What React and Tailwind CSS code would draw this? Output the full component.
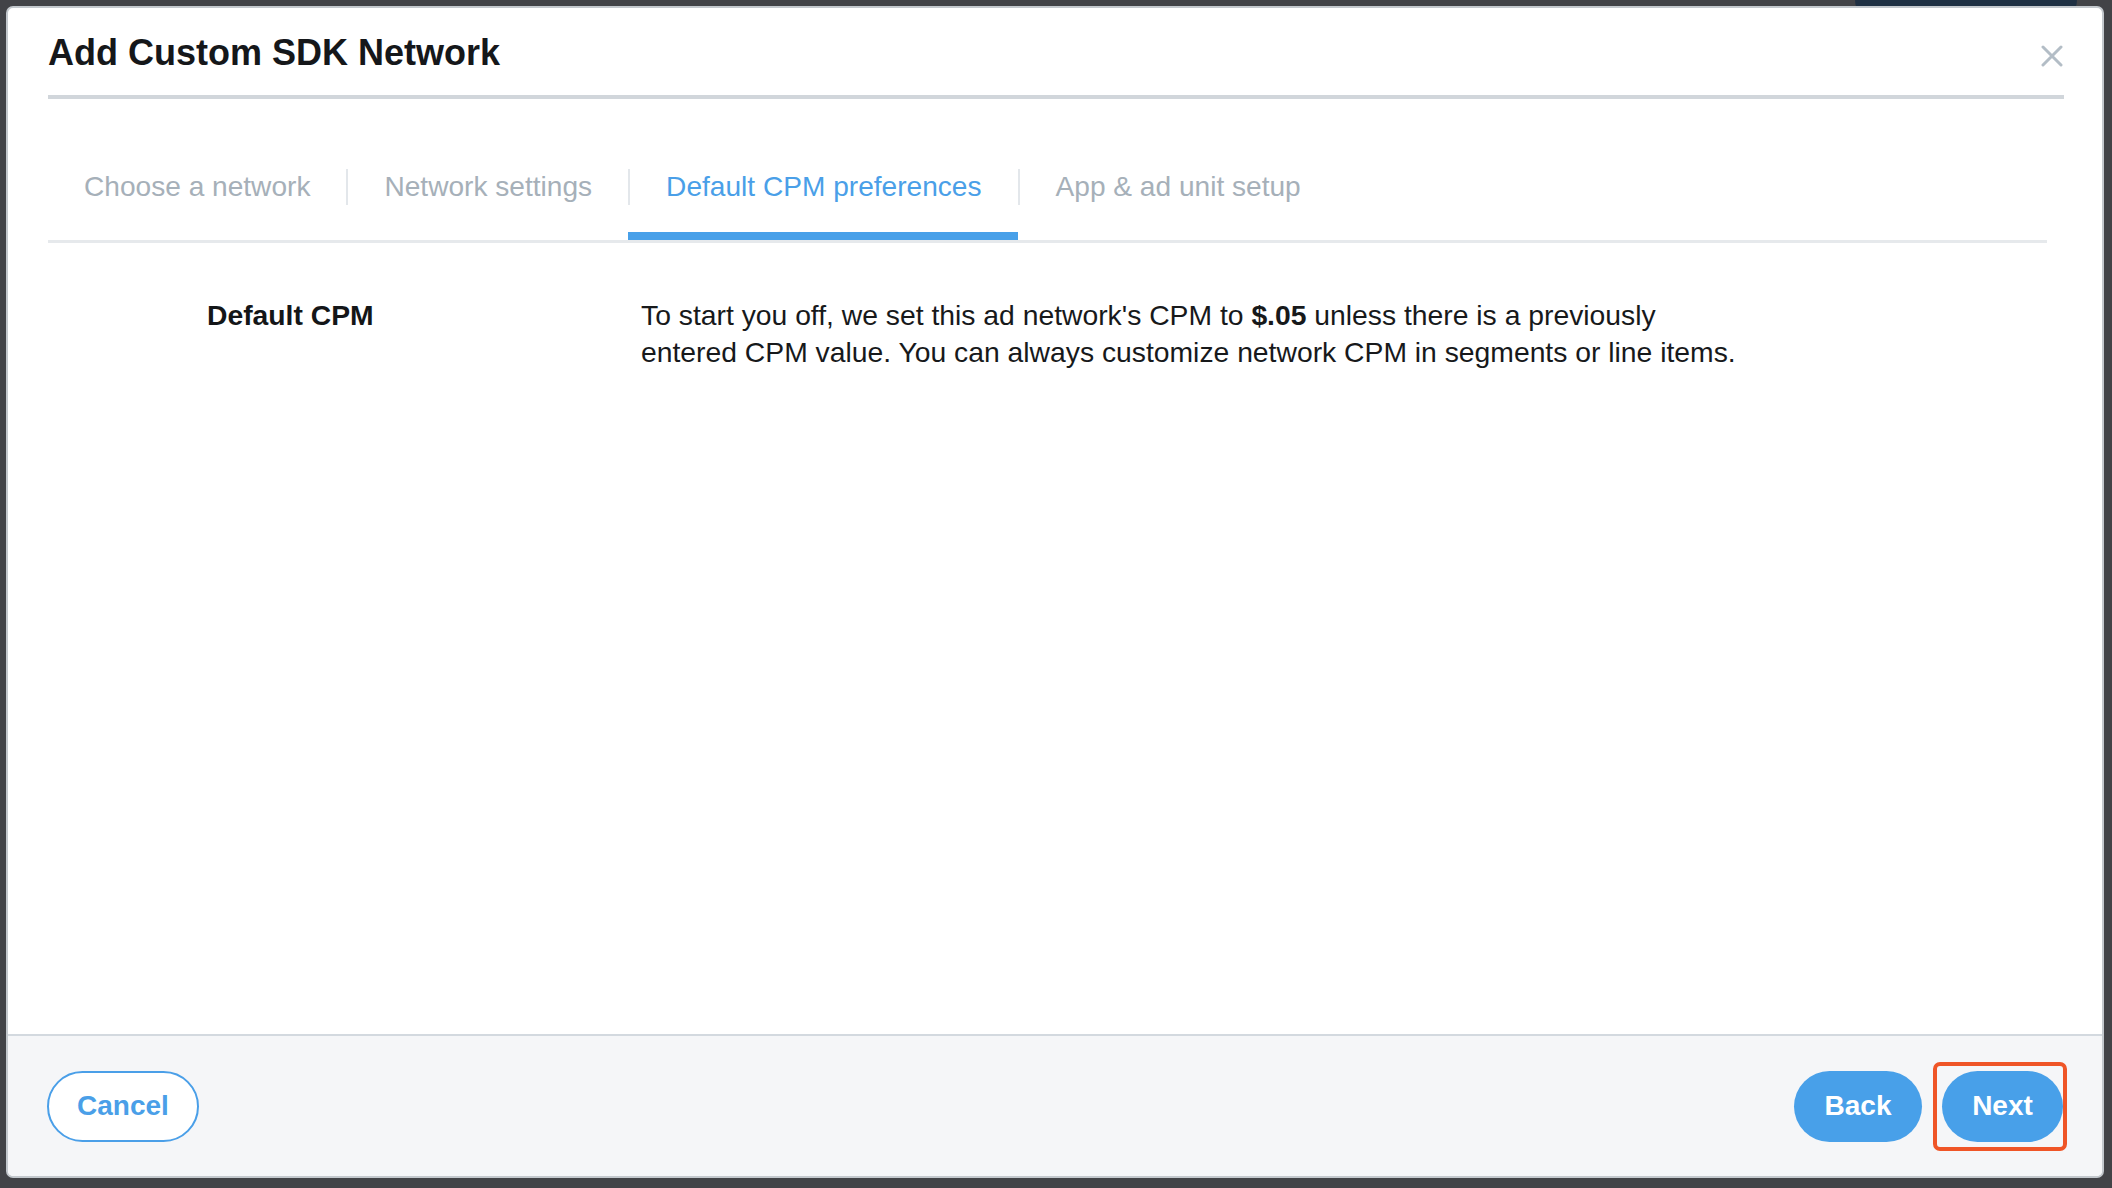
import React from 'react';

const tabs = ['Choose a network', 'Network settings', 'Default CPM preferences', 'App & ad unit setup'];
const active = 2;

const CloseIcon = () => (
  <svg width="22" height="22" viewBox="0 0 22 22" fill="none">
    <path d="M2 2L20 20M20 2L2 20" stroke="#b3bdc6" strokeWidth="3" strokeLinecap="round" />
  </svg>
);

export default function App() {
  return (
    <div className="relative w-full h-[1188px] bg-[#424347] pl-[6px] pt-[6px] overflow-hidden" style={{ fontFamily: '"Liberation Sans", Arial, sans-serif' }}>
      {/* bit of the page peeking out behind the dialog */}
      <div className="absolute top-[-20px] left-[1855px] w-[222px] h-[40px] rounded-[20px] bg-[#1f3043]"></div>

      <div className="relative w-[2098px] h-[1172px] bg-white border-2 border-[#c3c8cd] rounded-[7px] flex flex-col overflow-hidden">
        {/* header */}
        <div className="ml-[40px] mr-[38px] pt-[23px] pb-[20px] border-b-4 border-[#d1d6db] flex justify-between items-center">
          <h1 className="text-[36px] leading-[44px] font-bold text-[#15171a]">Add Custom SDK Network</h1>
          <button className="mt-[6px] mr-[1px]"><CloseIcon /></button>
        </div>

        {/* tabs */}
        <div className="ml-[40px] mr-[55px] mt-[70px] flex border-b-[3px] border-[#e6e9ec]">
          {tabs.map((t, i) => (
            <React.Fragment key={t}>
              {i > 0 && <div className="w-[2px] h-[36px] bg-[#e3e7eb]"></div>}
              <div className="flex flex-col">
                <span className={`px-[36px] h-[36px] leading-[36px] text-[28.1px] whitespace-nowrap ${i === active ? 'text-[#4a9fe8]' : 'text-[#a6b0b9]'}`}>{t}</span>
                <div className={`mt-[27px] h-[8px] ${i === active ? 'bg-[#48a0e9] -ml-[2px]' : ''}`}></div>
              </div>
            </React.Fragment>
          ))}
        </div>

        {/* body */}
        <div className="flex-1 ml-[40px] pl-[159px] pt-[54px] flex">
          <div className="w-[434px] text-[28.3px] leading-[37px] font-bold text-[#141618]">Default CPM</div>
          <p className="text-[28.3px] leading-[37px] text-[#17191b]">
            To start you off, we set this ad network's CPM to <span className="font-bold">$.05</span> unless there is a previously
            <br />
            entered CPM value. You can always customize network CPM in segments or line items.
          </p>
        </div>

        {/* footer */}
        <div className="h-[142px] bg-[#f5f6f8] border-t-2 border-[#d3d9df] px-[39px] flex items-center justify-between">
          <button className="h-[71px] px-[28px] rounded-full border-2 border-[#4a9fe8] bg-white text-[#4a9fe8] text-[28px] font-bold">Cancel</button>
          <div className="flex items-center gap-[20px]">
            <button className="h-[71px] w-[128px] rounded-full bg-[#48a0e9] text-white text-[28px] font-bold">Back</button>
            <div className="relative">
              <button className="h-[71px] w-[121px] rounded-full bg-[#48a0e9] text-white text-[28px] font-bold">Next</button>
              <div className="absolute -left-[9px] -top-[9px] -right-[4px] -bottom-[9px] border-[4px] border-[#ef5527] rounded-[7px] pointer-events-none"></div>
            </div>
          </div>
        </div>
      </div>
    </div>
  );
}
